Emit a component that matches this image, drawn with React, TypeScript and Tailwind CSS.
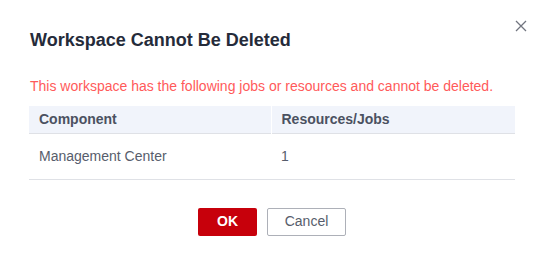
export default function App() {
  return (
    <div className="relative w-[539px] h-[262px] bg-white font-['Liberation_Sans',Arial,sans-serif]">
      {/* Close */}
      <button className="absolute left-[515px] top-[20px] w-[12px] h-[12px] text-[#71757f]">
        <svg width="12" height="12" viewBox="0 0 12 12" fill="none" stroke="currentColor" strokeWidth="1.3">
          <path d="M1 1 L11 11 M11 1 L1 11" />
        </svg>
      </button>

      <div className="pt-[28px] pl-[29px]">
        <h2 className="pl-px text-[18px] leading-[24px] font-bold text-[#252b3a]">
          Workspace Cannot Be Deleted
        </h2>
        <p className="mt-[24px] pl-px text-[14px] leading-[20px] text-[#ff5a5a]">
          This workspace has the following jobs or resources and cannot be deleted.
        </p>

        <table className="mt-[10px] w-[486px] border-collapse text-[14px] text-left">
          <thead>
            <tr className="h-[27px] bg-[#f1f4fb] border-b border-[#dfe1e6]">
              <th className="w-[242px] pl-[10px] font-bold text-[#4b5161] border-r border-white">Component</th>
              <th className="pl-[10px] font-bold text-[#4b5161]">Resources/Jobs</th>
            </tr>
          </thead>
          <tbody>
            <tr className="h-[46px] border-b border-[#dfe1e6] text-[#575d6c]">
              <td className="pl-[10px]">Management Center</td>
              <td className="pl-[10px]">1</td>
            </tr>
          </tbody>
        </table>

        <div className="mt-[28px] w-[486px] flex justify-center gap-[10px]">
          <button className="w-[59px] h-[28px] rounded-[2px] bg-[#c7000b] text-white text-[14px] font-bold">
            OK
          </button>
          <button className="w-[79px] h-[28px] rounded-[2px] border border-[#adb0b8] bg-white text-[#575d6c] text-[14px]">
            Cancel
          </button>
        </div>
      </div>
    </div>
  );
}
